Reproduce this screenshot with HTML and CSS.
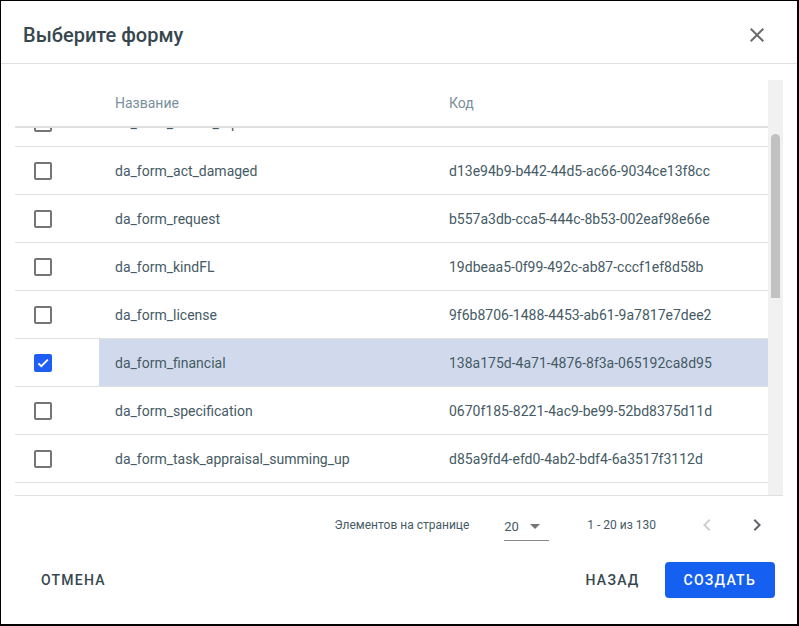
FILE: index.html
```html
<!DOCTYPE html>
<html lang="ru">
<head>
    <meta charset="UTF-8">
    <meta name="viewport" content="width=device-width, initial-scale=1.0">
    <title>Выберите форму</title>
    <link rel="stylesheet" href="styles.css">
</head>
<body>
    <div class="dialog">
        <div class="dialog-header">
            <h1 class="dialog-title">Выберите форму</h1>
            <button class="icon-btn close-btn" aria-label="Закрыть">
                <svg width="24" height="24" viewBox="0 0 24 24"><path d="M19 6.41L17.59 5 12 10.59 6.41 5 5 6.41 10.59 12 5 17.59 6.41 19 12 13.41 17.59 19 19 17.59 13.41 12z"/></svg>
            </button>
        </div>

        <div class="dialog-content">
            <div class="table-wrap">
                <div class="table-scroll">
                    <div class="table-head">
                        <div class="cell cell-check"></div>
                        <div class="cell cell-name">Название</div>
                        <div class="cell cell-code">Код</div>
                    </div>
                    <div class="table-body">
                        <div class="row">
                            <div class="cell cell-check"><span class="checkbox"></span></div>
                            <div class="cell cell-name">da_form_transit_report</div>
                            <div class="cell cell-code">4f0c2e61-7a3b-4e19-b0d2-5c8e1a9f3b27</div>
                        </div>
                        <div class="row">
                            <div class="cell cell-check"><span class="checkbox"></span></div>
                            <div class="cell cell-name">da_form_act_damaged</div>
                            <div class="cell cell-code">d13e94b9-b442-44d5-ac66-9034ce13f8cc</div>
                        </div>
                        <div class="row">
                            <div class="cell cell-check"><span class="checkbox"></span></div>
                            <div class="cell cell-name">da_form_request</div>
                            <div class="cell cell-code">b557a3db-cca5-444c-8b53-002eaf98e66e</div>
                        </div>
                        <div class="row">
                            <div class="cell cell-check"><span class="checkbox"></span></div>
                            <div class="cell cell-name">da_form_kindFL</div>
                            <div class="cell cell-code">19dbeaa5-0f99-492c-ab87-cccf1ef8d58b</div>
                        </div>
                        <div class="row">
                            <div class="cell cell-check"><span class="checkbox"></span></div>
                            <div class="cell cell-name">da_form_license</div>
                            <div class="cell cell-code">9f6b8706-1488-4453-ab61-9a7817e7dee2</div>
                        </div>
                        <div class="row selected">
                            <div class="cell cell-check">
                                <span class="checkbox checked">
                                    <svg width="14" height="14" viewBox="0 0 24 24"><path d="M4.1 12.7L9 17.6 20.3 6.3" fill="none" stroke="#fff" stroke-width="3.2"/></svg>
                                </span>
                            </div>
                            <div class="cell cell-name">da_form_financial</div>
                            <div class="cell cell-code">138a175d-4a71-4876-8f3a-065192ca8d95</div>
                        </div>
                        <div class="row">
                            <div class="cell cell-check"><span class="checkbox"></span></div>
                            <div class="cell cell-name">da_form_specification</div>
                            <div class="cell cell-code">0670f185-8221-4ac9-be99-52bd8375d11d</div>
                        </div>
                        <div class="row">
                            <div class="cell cell-check"><span class="checkbox"></span></div>
                            <div class="cell cell-name">da_form_task_appraisal_summing_up</div>
                            <div class="cell cell-code">d85a9fd4-efd0-4ab2-bdf4-6a3517f3112d</div>
                        </div>
                    </div>
                </div>
                <div class="scrollbar">
                    <div class="scrollbar-thumb"></div>
                </div>
            </div>

            <div class="paginator">
                <span class="page-size-label">Элементов на странице</span>
                <div class="page-size-select">
                    <span>20</span>
                    <span class="select-arrow"></span>
                </div>
                <span class="range-label">1 - 20 из 130</span>
                <button class="icon-btn page-btn" disabled aria-label="Назад">
                    <svg width="24" height="24" viewBox="0 0 24 24"><path d="M15.41 7.41L14 6l-6 6 6 6 1.41-1.41L10.83 12z"/></svg>
                </button>
                <button class="icon-btn page-btn" aria-label="Вперёд">
                    <svg width="24" height="24" viewBox="0 0 24 24"><path d="M10 6L8.59 7.41 13.17 12l-4.58 4.59L10 18l6-6z"/></svg>
                </button>
            </div>
        </div>

        <div class="dialog-actions">
            <button class="btn">Отмена</button>
            <div class="actions-right">
                <button class="btn">Назад</button>
                <button class="btn btn-primary">Создать</button>
            </div>
        </div>
    </div>
</body>
</html>
```

FILE: styles.css
```css
body{
    margin: 0px;
    font-family: Roboto, "Noto Sans", sans-serif;
    background: #ffffff;
}
.dialog{
    width: 799px;
    height: 626px;
    box-sizing: border-box;
    border: solid #000000;
    border-width: 1px 2px 2px 1px;
    display: flex;
    flex-direction: column;
}

/* header */
.dialog-header{
    height: 63px;
    box-sizing: border-box;
    padding: 6px 20px 0 22px;
    display: flex;
    align-items: center;
    justify-content: space-between;
    border-bottom: 1px solid #e0e0e0;
}
.dialog-title{
    margin: 0px;
    font-size: 20px;
    font-weight: 500;
    color: #37474f;
}
.icon-btn{
    border: none;
    background: none;
    padding: 0;
    width: 40px;
    height: 40px;
    display: flex;
    align-items: center;
    justify-content: center;
    cursor: pointer;
}
.icon-btn svg{
    fill: #616161;
}
.close-btn svg{
    fill: #6b6b6b;
}

/* table */
.dialog-content{
    padding: 16px 14px 0 14px;
}
.table-wrap{
    display: flex;
    height: 415px;
    border-bottom: 1px solid #e0e0e0;
}
.table-scroll{
    flex: 1;
    overflow: hidden;
}
.table-head{
    position: relative;
    z-index: 1;
    display: flex;
    height: 48px;
    box-sizing: border-box;
    background: #ffffff;
    border-bottom: 2px solid #e0e0e0;
    color: #78909c;
    font-size: 14px;
}
.table-body{
    margin-top: -29px;
}
.row{
    display: flex;
    height: 48px;
    box-sizing: border-box;
    border-bottom: 1px solid #e0e0e0;
    color: #455a64;
    font-size: 14px;
}
.cell{
    display: flex;
    align-items: center;
    white-space: nowrap;
}
.cell-check{
    width: 84px;
    padding-left: 19px;
    box-sizing: border-box;
    background: #ffffff;
}
.cell-name{
    width: 334px;
    padding-left: 16px;
    box-sizing: border-box;
}
.cell-code{
    flex: 1;
    padding-left: 16px;
}
.row.selected{
    background: #d1daed;
}
.checkbox{
    width: 18px;
    height: 18px;
    box-sizing: border-box;
    border: 2px solid #757575;
    border-radius: 2px;
    display: flex;
    align-items: center;
    justify-content: center;
}
.checkbox.checked{
    background: #1f5ef5;
    border-color: #1f5ef5;
}

/* fake scrollbar */
.scrollbar{
    width: 15px;
    background: #f1f1f1;
}
.scrollbar-thumb{
    margin: 54px 3px 0 3px;
    height: 164px;
    background: #c1c1c1;
    border-radius: 5px 5px 0 0;
}

/* paginator */
.paginator{
    height: 56px;
    box-sizing: border-box;
    padding: 2px 6px 0 0;
    display: flex;
    align-items: center;
    justify-content: flex-end;
    font-size: 12px;
    color: #455a64;
}
.page-size-select{
    width: 45px;
    height: 24px;
    margin: 8px 38px 0 35px;
    display: flex;
    align-items: center;
    justify-content: space-between;
    border-bottom: 1px solid #8a8a8a;
    padding-bottom: 4px;
    font-size: 13px;
    box-sizing: border-box;
}
.select-arrow{
    width: 0;
    height: 0;
    margin-right: 9px;
    border-left: 5px solid transparent;
    border-right: 5px solid transparent;
    border-top: 5px solid #757575;
}
.range-label{
    margin-right: 31px;
}
.page-btn + .page-btn{
    margin-left: 10px;
}
.page-btn svg{
    fill: #5f6368;
}
.page-btn:disabled svg{
    fill: #cfcfcf;
}

/* actions */
.dialog-actions{
    display: flex;
    justify-content: space-between;
    align-items: center;
    padding: 10px 22px 0 24px;
}
.actions-right{
    display: flex;
    gap: 9px;
}
.btn{
    height: 36px;
    padding: 0 16px;
    border: none;
    border-radius: 4px;
    background: none;
    font-family: Roboto, sans-serif;
    font-size: 14px;
    font-weight: 500;
    letter-spacing: 1.25px;
    text-transform: uppercase;
    color: #37474f;
    cursor: pointer;
}
.btn-primary{
    background: #1560f0;
    color: #ffffff;
    padding: 0 19px;
}
```
